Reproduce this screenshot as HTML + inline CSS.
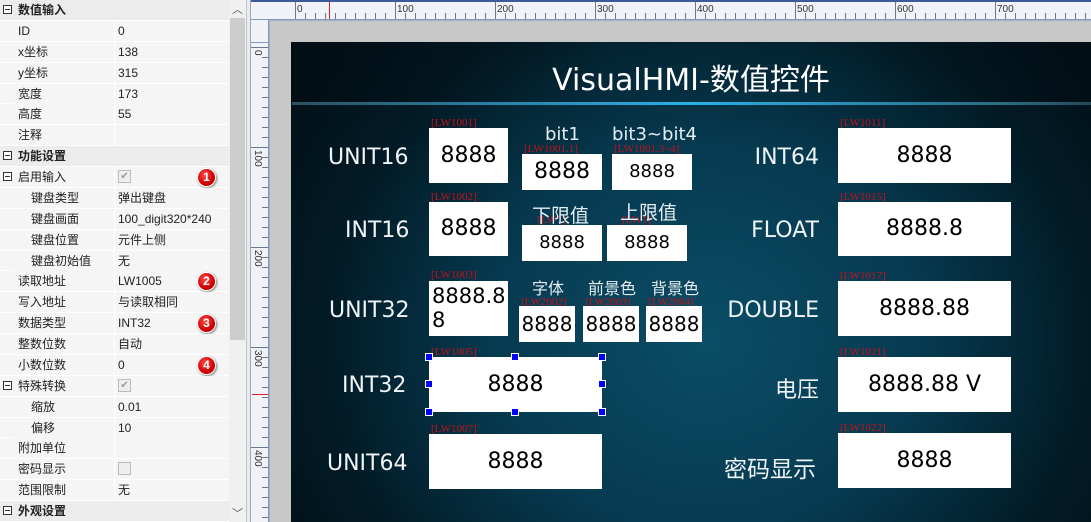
<!DOCTYPE html>
<html><head><meta charset="utf-8"><style>
*{margin:0;padding:0;box-sizing:border-box}
body{width:1091px;height:522px;overflow:hidden;background:#fff;font-family:"Liberation Sans","Noto Sans CJK SC",sans-serif;position:relative}
.a{position:absolute}
#left{left:0;top:0;width:229px;height:522px;background:#f5f5f5;font-size:12px;color:#222}
.r{position:absolute;left:0;width:229px;height:20.88px;border-bottom:1px solid #fff;line-height:20px}
.r .k{position:absolute;left:14px;top:0;width:101px;height:20px;padding-left:4px;background:#f5f5f5;border-right:1px solid #fff}
.r .v{position:absolute;left:115px;top:0;right:0;height:20px;padding-left:3px;background:#f5f5f5}
.r.h{background:#ececec}.r.h .k{background:#ececec;border:none;font-weight:bold;width:200px}
.r .k.i{padding-left:17px}
.mx{position:absolute;left:3px;top:5px;width:9px;height:9px;border:1px solid #333;background:#fff}
.mx:after{content:"";position:absolute;left:1px;top:3px;width:5px;height:1px;background:#333}
.cb{position:absolute;left:3px;top:3px;width:13px;height:13px;border:1px solid #bbb;background:#eee;color:#999;font-size:10px;line-height:11px;text-align:center}
.bd{position:absolute;left:197px;top:1px;width:19px;height:19px;border-radius:50%;background:radial-gradient(circle at 40% 35%,#ff4a4a,#d00000 60%,#a00000);border:1.5px solid #fff;box-shadow:1px 1px 2px #777;color:#fff;font-weight:bold;font-size:12px;text-align:center;line-height:16px}
#dark{left:291px;top:42px;width:800px;height:480px;background:radial-gradient(ellipse 60% 90% at 52% 62%,#0b4d66 0%,#063a50 45%,#021a25 80%,#01121a 100%)}
.lb{position:absolute;color:#f0f4f6;font-size:22px;font-family:"DejaVu Sans","Noto Sans CJK SC",sans-serif;white-space:nowrap}
.bx{position:absolute;background:#fff;color:#000;font-family:"DejaVu Sans",sans-serif;font-size:22px;text-align:center}
.tg{position:absolute;color:#c8101a;font-family:"Liberation Serif",serif;font-size:11px;white-space:nowrap}
.sm{position:absolute;color:#e6eef2;font-size:16px;font-family:"DejaVu Sans","Noto Sans CJK SC",sans-serif;white-space:nowrap}
.hd{position:absolute;width:8px;height:8px;background:#0000ff;border:1px solid #fff}
</style></head><body>
<div id="left" class="a">
<div class="r h" style="top:0"><span class="mx"></span><div class="k">数值输入</div></div>
<div class="r" style="top:20.88px"><div class="k">ID</div><div class="v">0</div></div>
<div class="r" style="top:41.76px"><div class="k">x坐标</div><div class="v">138</div></div>
<div class="r" style="top:62.64px"><div class="k">y坐标</div><div class="v">315</div></div>
<div class="r" style="top:83.52px"><div class="k">宽度</div><div class="v">173</div></div>
<div class="r" style="top:104.4px"><div class="k">高度</div><div class="v">55</div></div>
<div class="r" style="top:125.28px"><div class="k">注释</div><div class="v"></div></div>
<div class="r h" style="top:146.16px"><span class="mx"></span><div class="k">功能设置</div></div>
<div class="r" style="top:167.04px;background:#f5f5f5"><span class="mx"></span><div class="k">启用输入</div><div class="v"><span class="cb">✔</span><span class="bd" style="left:82px">1</span></div></div>
<div class="r" style="top:187.92px"><div class="k i">键盘类型</div><div class="v">弹出键盘</div></div>
<div class="r" style="top:208.8px"><div class="k i">键盘画面</div><div class="v">100_digit320*240</div></div>
<div class="r" style="top:229.68px"><div class="k i">键盘位置</div><div class="v">元件上侧</div></div>
<div class="r" style="top:250.56px"><div class="k i">键盘初始值</div><div class="v">无</div></div>
<div class="r" style="top:271.44px"><div class="k">读取地址</div><div class="v">LW1005<span class="bd" style="left:82px">2</span></div></div>
<div class="r" style="top:292.32px"><div class="k">写入地址</div><div class="v">与读取相同</div></div>
<div class="r" style="top:313.2px"><div class="k">数据类型</div><div class="v">INT32<span class="bd" style="left:82px">3</span></div></div>
<div class="r" style="top:334.08px"><div class="k">整数位数</div><div class="v">自动</div></div>
<div class="r" style="top:354.96px"><div class="k">小数位数</div><div class="v">0<span class="bd" style="left:82px">4</span></div></div>
<div class="r" style="top:375.84px"><span class="mx"></span><div class="k">特殊转换</div><div class="v"><span class="cb">✔</span></div></div>
<div class="r" style="top:396.72px"><div class="k i">缩放</div><div class="v">0.01</div></div>
<div class="r" style="top:417.6px"><div class="k i">偏移</div><div class="v">10</div></div>
<div class="r" style="top:438.48px"><div class="k">附加单位</div><div class="v"></div></div>
<div class="r" style="top:459.36px"><div class="k">密码显示</div><div class="v"><span class="cb"></span></div></div>
<div class="r" style="top:480.24px"><div class="k">范围限制</div><div class="v">无</div></div>
<div class="r h" style="top:501.12px"><span class="mx"></span><div class="k">外观设置</div></div>
</div>
<!-- scrollbar -->
<div class="a" style="left:229px;top:0;width:17px;height:522px;background:#f0f0f0"></div>
<div class="a" style="left:230px;top:18px;width:15px;height:322px;background:#cdcdcd"></div>
<div class="a" style="left:232px;top:1px;font-size:11px;color:#555">︿</div>
<div class="a" style="left:232px;top:505px;font-size:11px;color:#555">﹀</div>
<div class="a" style="left:246px;top:0;width:5px;height:522px;background:#e8eaf0;border-left:1px solid #c0c4cc;border-right:1px solid #a0a8b8"></div>
<!-- rulers -->
<div class="a" style="left:251px;top:0;width:840px;height:20px;background:#f0f2f8;border-top:2px solid #3a5a9a;border-bottom:1px solid #8898b8"></div>
<div class="a" style="left:295px;top:13px;width:796px;height:6px;background:repeating-linear-gradient(90deg,#6a7890 0 1px,transparent 1px 10px)"></div>
<div class="a" style="left:295px;top:2px;width:796px;height:17px;background:repeating-linear-gradient(90deg,#6a7890 0 1px,transparent 1px 100px)"></div>
<div class="a" style="left:329px;top:2px;width:1px;height:17px;background:#e02020"></div>
<div class="a" style="left:251px;top:20px;width:18px;height:502px;background:#f0f2f8;border-right:1px solid #8898b8"></div>
<div class="a" style="left:251px;top:42px;width:18px;height:1px;background:#8898b8"></div>
<div class="a" style="left:262px;top:47px;width:6px;height:475px;background:repeating-linear-gradient(180deg,#6a7890 0 1px,transparent 1px 10px)"></div>
<div class="a" style="left:251px;top:47px;width:17px;height:475px;background:repeating-linear-gradient(180deg,#6a7890 0 1px,transparent 1px 100px)"></div>
<div class="a" style="left:252px;top:394px;width:16px;height:1px;background:#e02020"></div>
<div class="a" style="font-size:10px;color:#333;top:4px;left:297px">0</div>
<div class="a" style="font-size:10px;color:#333;top:4px;left:397px">100</div>
<div class="a" style="font-size:10px;color:#333;top:4px;left:497px">200</div>
<div class="a" style="font-size:10px;color:#333;top:4px;left:597px">300</div>
<div class="a" style="font-size:10px;color:#333;top:4px;left:697px">400</div>
<div class="a" style="font-size:10px;color:#333;top:4px;left:797px">500</div>
<div class="a" style="font-size:10px;color:#333;top:4px;left:897px">600</div>
<div class="a" style="font-size:10px;color:#333;top:4px;left:997px">700</div>
<div class="a" style="font-size:10px;color:#333;top:50px;transform:rotate(90deg);transform-origin:0 0;left:263px">0</div>
<div class="a" style="font-size:10px;color:#333;top:150px;transform:rotate(90deg);transform-origin:0 0;left:263px">100</div>
<div class="a" style="font-size:10px;color:#333;top:250px;transform:rotate(90deg);transform-origin:0 0;left:263px">200</div>
<div class="a" style="font-size:10px;color:#333;top:350px;transform:rotate(90deg);transform-origin:0 0;left:263px">300</div>
<div class="a" style="font-size:10px;color:#333;top:450px;transform:rotate(90deg);transform-origin:0 0;left:263px">400</div>
<!-- canvas -->
<div class="a" style="left:269px;top:20px;width:822px;height:502px;background:#c8c8c8;border-left:1px solid #a0b0c8;border-top:1px solid #a0b0c8"></div>
<div id="dark" class="a"></div>
<div class="a" style="left:291px;top:42px;width:800px;height:60px;background:linear-gradient(90deg,rgba(0,10,15,.5),rgba(0,0,0,0) 40%,rgba(0,0,0,0) 70%,rgba(0,10,15,.5))"></div>
<div class="a" style="left:291px;top:55px;width:800px;text-align:center;color:#fff;font-size:30px;font-family:'DejaVu Sans','Noto Sans CJK SC',sans-serif">VisualHMI-数值控件</div>
<div class="a" style="left:292px;top:102px;width:799px;height:3px;background:linear-gradient(90deg,#2a5060,#2ab0e8 50%,#2a6a80 90%,#244a58)"></div>
<!-- left column -->
<div class="lb" style="left:328px;top:145px">UNIT16</div>
<div class="tg" style="left:431px;top:117px">[LW1001]</div>
<div class="bx" style="left:429px;top:128px;width:79px;height:55px;line-height:55px">8888</div>
<div class="sm" style="left:545px;top:124px;font-size:18px">bit1</div>
<div class="sm" style="left:612px;top:124px;font-size:18px">bit3~bit4</div>
<div class="tg" style="left:524px;top:143px">[LW1001.1]</div>
<div class="tg" style="left:614px;top:143px">[LW1001.3~4]</div>
<div class="bx" style="left:522px;top:154px;width:80px;height:36px;line-height:36px">8888</div>
<div class="bx" style="left:612px;top:154px;width:80px;height:36px;line-height:36px;font-size:18px">8888</div>

<div class="lb" style="left:345px;top:218px">INT16</div>
<div class="tg" style="left:431px;top:191px">[LW1002]</div>
<div class="bx" style="left:429px;top:202px;width:79px;height:54px;line-height:54px">8888</div>
<div class="tg" style="left:537px;top:214px">[LW1]</div>
<div class="tg" style="left:622px;top:214px">[LW1]</div>
<div class="sm" style="left:532px;top:201px;font-size:19px">下限值</div>
<div class="sm" style="left:620px;top:198px;font-size:19px">上限值</div>
<div class="bx" style="left:522px;top:225px;width:80px;height:36px;line-height:36px;font-size:18px">8888</div>
<div class="bx" style="left:607px;top:225px;width:80px;height:36px;line-height:36px;font-size:18px">8888</div>

<div class="lb" style="left:329px;top:298px">UNIT32</div>
<div class="tg" style="left:431px;top:269px">[LW1003]</div>
<div class="bx" style="left:429px;top:281px;width:79px;height:55px;text-align:left;padding-left:3px;line-height:24px;padding-top:3px;font-size:21px">8888.8<br>8</div>
<div class="sm" style="left:532px;top:275px">字体</div>
<div class="sm" style="left:588px;top:275px">前景色</div>
<div class="sm" style="left:651px;top:275px">背景色</div>
<div class="tg" style="left:521px;top:296px">[LW2002]</div>
<div class="tg" style="left:585px;top:296px">[LW2003]</div>
<div class="tg" style="left:648px;top:296px">[LW2004]</div>
<div class="bx" style="left:519px;top:306px;width:56px;height:36px;line-height:36px;font-size:20px">8888</div>
<div class="bx" style="left:583px;top:306px;width:56px;height:36px;line-height:36px;font-size:20px">8888</div>
<div class="bx" style="left:646px;top:306px;width:56px;height:36px;line-height:36px;font-size:20px">8888</div>

<div class="lb" style="left:342px;top:373px">INT32</div>
<div class="tg" style="left:431px;top:346px">[LW1005]</div>
<div class="bx" style="left:429px;top:357px;width:173px;height:55px;line-height:55px">8888</div>
<div class="hd" style="left:425px;top:353px"></div><div class="hd" style="left:511px;top:353px"></div><div class="hd" style="left:598px;top:353px"></div>
<div class="hd" style="left:425px;top:380px"></div><div class="hd" style="left:598px;top:380px"></div>
<div class="hd" style="left:425px;top:408px"></div><div class="hd" style="left:511px;top:408px"></div><div class="hd" style="left:598px;top:408px"></div>

<div class="lb" style="left:327px;top:451px">UNIT64</div>
<div class="tg" style="left:431px;top:423px">[LW1007]</div>
<div class="bx" style="left:429px;top:434px;width:173px;height:55px;line-height:55px">8888</div>
<!-- right column -->
<div class="lb" style="left:620px;width:199px;text-align:right;top:145px">INT64</div>
<div class="tg" style="left:840px;top:117px">[LW1011]</div>
<div class="bx" style="left:838px;top:128px;width:173px;height:55px;line-height:55px">8888</div>
<div class="lb" style="left:620px;width:199px;text-align:right;top:218px">FLOAT</div>
<div class="tg" style="left:840px;top:191px">[LW1015]</div>
<div class="bx" style="left:838px;top:202px;width:173px;height:54px;line-height:54px">8888.8</div>
<div class="lb" style="left:620px;width:199px;text-align:right;top:298px">DOUBLE</div>
<div class="tg" style="left:840px;top:270px">[LW1017]</div>
<div class="bx" style="left:838px;top:281px;width:173px;height:55px;line-height:55px">8888.88</div>
<div class="lb" style="left:620px;width:199px;text-align:right;top:372px">电压</div>
<div class="tg" style="left:840px;top:346px">[LW1021]</div>
<div class="bx" style="left:838px;top:357px;width:173px;height:55px;line-height:55px">8888.88 V</div>
<div class="lb" style="left:724px;top:450px;font-size:23px">密码显示</div>
<div class="tg" style="left:840px;top:422px">[LW1022]</div>
<div class="bx" style="left:838px;top:433px;width:173px;height:55px;line-height:55px">8888</div>
</body></html>
